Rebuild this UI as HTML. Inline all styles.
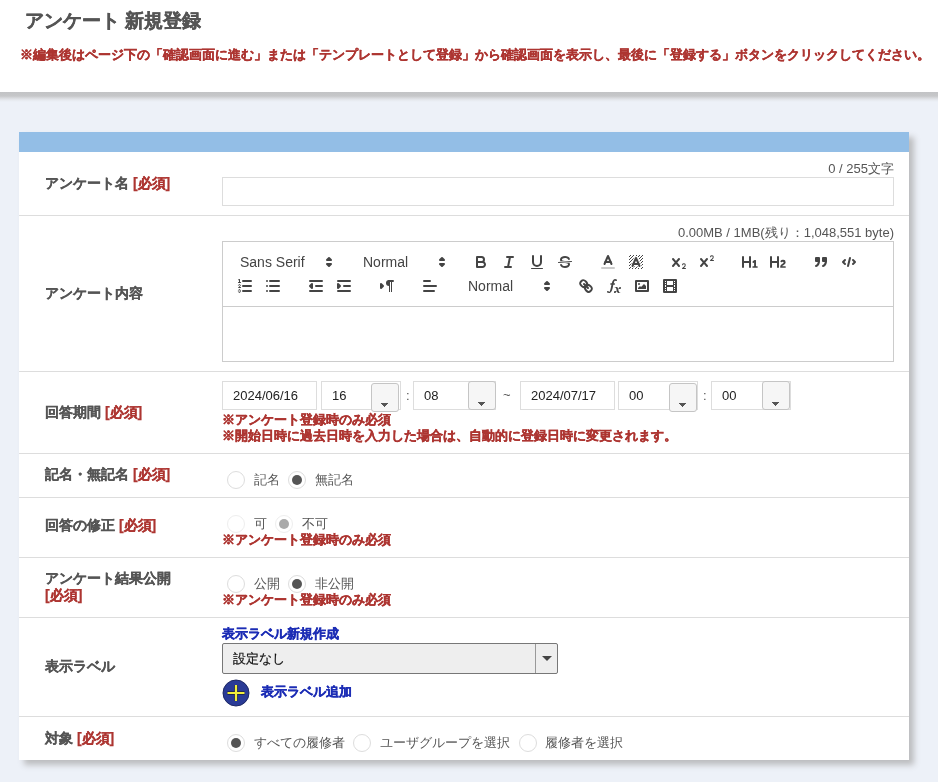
<!DOCTYPE html>
<html><head><meta charset="utf-8">
<style>
*{box-sizing:border-box}
html,body{margin:0;padding:0}
body{width:938px;height:782px;overflow:hidden;background:#edf1f8;font-family:"Liberation Sans",sans-serif;color:#555;position:relative}
.a{position:absolute;white-space:nowrap}
#hdr{position:absolute;left:0;top:0;width:938px;height:92px;background:#fff}
#hsh{position:absolute;left:0;top:92px;width:938px;height:10px;background:linear-gradient(to bottom,#c2c3c5 0px,#c6c7c9 4px,#d8dadd 6px,#e6e9ee 8px,#edf1f8 10px)}
#title{left:25px;top:9px;font-size:19px;font-weight:bold;color:#555;line-height:24px}
#note{left:20px;top:46px;font-size:13px;font-weight:bold;color:#ad3531;line-height:18px}
#card{position:absolute;left:19px;top:132px;width:890px;height:628px;background:#fff;box-shadow:5px 5px 6px #bcbdbf}
#bar{position:absolute;left:19px;top:132px;width:890px;height:20px;background:#93bee6}
.sep{position:absolute;left:19px;width:890px;height:1px;background:#ddd}
.lbl{position:absolute;left:45px;font-size:14px;font-weight:bold;color:#555;line-height:18px;white-space:nowrap}
.req{color:#ad3531}
.red{position:absolute;font-size:13px;font-weight:bold;color:#ad3531;line-height:16px;white-space:nowrap}
.inp{position:absolute;border:1px solid #ddd;background:#fff;height:29px}
.txt{position:absolute;font-size:13px;color:#222;line-height:16px;white-space:nowrap}
.cnt{position:absolute;right:44px;font-size:13px;color:#555;line-height:16px;white-space:nowrap}
.btn{position:absolute;width:28px;height:29px;border:1px solid #c5c5c5;border-radius:3px;background:#f6f6f6}
.btn:after{content:"";position:absolute;left:9px;top:19px;width:7px;height:4px;background:linear-gradient(#555,#555) 0 0/7px 1px no-repeat,linear-gradient(#555,#555) 1px 1px/5px 1px no-repeat,linear-gradient(#555,#555) 2px 2px/3px 1px no-repeat,linear-gradient(#555,#555) 3px 3px/1px 1px no-repeat}
.radio{position:absolute;width:18px;height:18px;border:1px solid #ddd;border-radius:50%;background:#fff}
.radio.on:after{content:"";position:absolute;left:3px;top:3px;width:10px;height:10px;border-radius:50%;background:#555}
.radio.dis{border-color:#eee}
.radio.dis.on:after{background:#aaa}
.rt{position:absolute;font-size:13px;color:#555;line-height:16px;white-space:nowrap}
.blue{position:absolute;font-size:13px;font-weight:bold;color:#1c2db5;line-height:16px;white-space:nowrap}

.ql-toolbar{border:1px solid #ccc;padding:8px;font-family:"Liberation Sans",sans-serif;box-sizing:border-box;line-height:normal;font-size:14px}
.ql-toolbar:after{clear:both;content:'';display:table}
.ql-formats{display:inline-block;vertical-align:middle;margin-right:15px}
.ql-formats:after{clear:both;content:'';display:table}
.ql-toolbar button{background:none;border:none;cursor:pointer;display:inline-block;float:left;height:24px;padding:3px 5px;width:28px;margin:0;box-sizing:border-box}
.ql-toolbar button svg{float:left;height:100%}
.ql-stroke{fill:none;stroke:#444;stroke-linecap:round;stroke-linejoin:round;stroke-width:2}
.ql-fill{fill:#444}
.ql-thin{stroke-width:1}
.ql-even{fill-rule:evenodd}
.ql-picker{color:#444;display:inline-block;float:left;font-size:14px;font-weight:500;height:24px;position:relative;vertical-align:middle}
.ql-picker-label{display:inline-block;height:100%;padding-left:8px;padding-right:2px;position:relative;width:100%;box-sizing:border-box;border:1px solid transparent}
.ql-picker-label::before{content:attr(data-l);display:inline-block;line-height:22px}
.ql-picker-label svg{position:absolute;margin-top:-9px;right:0;top:50%;width:18px;height:18px}
.ql-picker-label svg .ql-stroke{stroke-width:2}
.ql-font{width:108px}.ql-size,.ql-header{width:98px}
.sk{-webkit-text-stroke:0.25px currentColor}
.red.sk,.blue.sk{-webkit-text-stroke:0.35px currentColor}
#note{-webkit-text-stroke:0.3px currentColor}
#title{-webkit-text-stroke:0.45px #555}
.b2:after{top:20px}
</style></head><body><div id="wrap" style="position:absolute;left:0;top:0;width:938px;height:782px;will-change:transform">
<div id="hdr"></div><div id="hsh"></div>
<div id="title" class="a sk">アンケート 新規登録</div>
<div id="note" class="a sk">※編集後はページ下の「確認画面に進む」または「テンプレートとして登録」から確認画面を表示し、最後に「登録する」ボタンをクリックしてください。</div>

<div id="card"></div>
<div id="bar"></div>
<div class="sep" style="top:215px"></div>
<div class="sep" style="top:371px"></div>
<div class="sep" style="top:453px"></div>
<div class="sep" style="top:497px"></div>
<div class="sep" style="top:557px"></div>
<div class="sep" style="top:617px"></div>
<div class="sep" style="top:716px"></div>

<!-- row 1 -->
<div class="lbl sk" style="top:174px">アンケート名 <span class="req">[必須]</span></div>
<div class="cnt" style="top:161px">0 / 255文字</div>
<div class="inp" style="left:222px;top:177px;width:672px"></div>

<!-- row 2 -->
<div class="lbl sk" style="top:284px">アンケート内容</div>
<div class="cnt" style="top:225px">0.00MB / 1MB(残り：1,048,551 byte)</div>
<div class="inp" style="left:222px;top:241px;width:672px;height:121px;border-color:#ccc"></div>

<!-- quill toolbar -->
<div class="ql-toolbar" style="position:absolute;left:222px;top:241px;width:672px;height:66px"><span class="ql-formats"><span class="ql-picker ql-font"><span class="ql-picker-label" data-l="Sans Serif"><svg viewBox="0 0 18 18"><polygon class="ql-stroke" points="7 11 9 13 11 11 7 11"></polygon><polygon class="ql-stroke" points="7 7 9 5 11 7 7 7"></polygon></svg></span></span></span><span class="ql-formats"><span class="ql-picker ql-size"><span class="ql-picker-label" data-l="Normal"><svg viewBox="0 0 18 18"><polygon class="ql-stroke" points="7 11 9 13 11 11 7 11"></polygon><polygon class="ql-stroke" points="7 7 9 5 11 7 7 7"></polygon></svg></span></span></span><span class="ql-formats"><button><svg viewBox="0 0 18 18"><path class="ql-stroke" d="M5,4H9.5A2.5,2.5,0,0,1,12,6.5v0A2.5,2.5,0,0,1,9.5,9H5A0,0,0,0,1,5,9V4A0,0,0,0,1,5,4Z"></path><path class="ql-stroke" d="M5,9h5.5A2.5,2.5,0,0,1,13,11.5v0A2.5,2.5,0,0,1,10.5,14H5a0,0,0,0,1,0,0V9A0,0,0,0,1,5,9Z"></path></svg></button><button><svg viewBox="0 0 18 18"><line class="ql-stroke" x1="7" x2="13" y1="4" y2="4"></line><line class="ql-stroke" x1="5" x2="11" y1="14" y2="14"></line><line class="ql-stroke" x1="8" x2="10" y1="14" y2="4"></line></svg></button><button><svg viewBox="0 0 18 18"><path class="ql-stroke" d="M5,3V9a4.012,4.012,0,0,0,4,4H9a4.012,4.012,0,0,0,4-4V3"></path><rect class="ql-fill" height="1" rx="0.5" ry="0.5" width="12" x="3" y="15"></rect></svg></button><button><svg viewBox="0 0 18 18"><line class="ql-stroke ql-thin" x1="15.5" x2="2.5" y1="8.5" y2="9.5"></line><path class="ql-fill" d="M9.007,8C6.542,7.791,6,7.519,6,6.5,6,5.792,7.283,5,9,5c1.571,0,2.765.679,2.969,1.309a1,1,0,0,0,1.9-.617C13.356,4.106,11.354,3,9,3,6.2,3,4,4.538,4,6.5a3.2,3.2,0,0,0,.5,1.843Z"></path><path class="ql-fill" d="M8.984,10C11.457,10.208,12,10.479,12,11.5c0,0.708-1.283,1.5-3,1.5-1.571,0-2.765-.679-2.969-1.309a1,1,0,1,0-1.9.617C4.644,13.894,6.646,15,9,15c2.8,0,5-1.538,5-3.5a3.2,3.2,0,0,0-.5-1.843Z"></path></svg></button></span><span class="ql-formats"><button><svg viewBox="0 0 18 18"><line class="ql-stroke" style="stroke:#ccc" x1="3" x2="15" y1="15" y2="15"></line><polyline class="ql-stroke" points="5.5 11 9 3 12.5 11"></polyline><line class="ql-stroke" x1="11.63" x2="6.38" y1="9" y2="9"></line></svg></button><button><svg viewBox="0 0 18 18"><g class="ql-fill"><polygon points="6 6.868 6 6 5 6 5 7 5.942 7 6 6.868"></polygon><rect height="1" width="1" x="4" y="4"></rect><polygon points="6.817 5 6 5 6 6 6.38 6 6.817 5"></polygon><rect height="1" width="1" x="2" y="6"></rect><rect height="1" width="1" x="3" y="5"></rect><rect height="1" width="1" x="4" y="7"></rect><polygon points="4 11.439 4 11 3 11 3 12 3.755 12 4 11.439"></polygon><rect height="1" width="1" x="2" y="12"></rect><rect height="1" width="1" x="2" y="9"></rect><rect height="1" width="1" x="2" y="15"></rect><polygon points="4.63 10 4 10 4 11 4.192 11 4.63 10"></polygon><rect height="1" width="1" x="3" y="8"></rect><path d="M10.832,4.2L11,4.582V4H10.708A1.948,1.948,0,0,1,10.832,4.2Z"></path><path d="M7,4.582L7.168,4.2A1.929,1.929,0,0,1,7.292,4H7V4.582Z"></path><path d="M8,13H7.683l-0.351.8a1.933,1.933,0,0,1-.124.2H8V13Z"></path><rect height="1" width="1" x="12" y="2"></rect><rect height="1" width="1" x="11" y="3"></rect><path d="M9,3H8V3.282A1.985,1.985,0,0,1,9,3Z"></path><rect height="1" width="1" x="2" y="3"></rect><rect height="1" width="1" x="6" y="2"></rect><rect height="1" width="1" x="3" y="2"></rect><rect height="1" width="1" x="5" y="3"></rect><rect height="1" width="1" x="9" y="2"></rect><rect height="1" width="1" x="15" y="14"></rect><polygon points="13.447 10.174 13.469 10.225 13.472 10.232 13.808 11 14 11 14 10 13.37 10 13.447 10.174"></polygon><rect height="1" width="1" x="13" y="7"></rect><rect height="1" width="1" x="15" y="5"></rect><rect height="1" width="1" x="14" y="6"></rect><rect height="1" width="1" x="15" y="8"></rect><rect height="1" width="1" x="14" y="9"></rect><path d="M3.775,14H3v1H4V14.314A1.97,1.97,0,0,1,3.775,14Z"></path><rect height="1" width="1" x="14" y="3"></rect><polygon points="12 6.868 12 6 11.62 6 12 6.868"></polygon><rect height="1" width="1" x="15" y="2"></rect><rect height="1" width="1" x="12" y="5"></rect><rect height="1" width="1" x="13" y="4"></rect><polygon points="12.933 9 13 9 13 8 12.495 8 12.933 9"></polygon><rect height="1" width="1" x="9" y="14"></rect><rect height="1" width="1" x="8" y="15"></rect><path d="M6,14.926V15H7V14.316A1.993,1.993,0,0,1,6,14.926Z"></path><rect height="1" width="1" x="5" y="15"></rect><path d="M10.668,13.8L10.317,13H10v1h0.792A1.947,1.947,0,0,1,10.668,13.8Z"></path><rect height="1" width="1" x="11" y="15"></rect><path d="M14.332,12.2a1.99,1.99,0,0,1,.166.8H15V12H14.245Z"></path><rect height="1" width="1" x="14" y="15"></rect><rect height="1" width="1" x="15" y="11"></rect></g><polyline class="ql-stroke" points="5.5 13 9 5 12.5 13"></polyline><line class="ql-stroke" x1="11.63" x2="6.38" y1="11" y2="11"></line></svg></button></span><span class="ql-formats"><button><svg viewBox="0 0 18 18"><path class="ql-fill" d="M15.5,15H13.861a3.858,3.858,0,0,0,1.914-2.975,1.8,1.8,0,0,0-1.6-1.751A1.921,1.921,0,0,0,12.021,11.7a0.50013,0.50013,0,1,0,.957.291h0a0.914,0.914,0,0,1,1.053-.725,0.81,0.81,0,0,1,.744.762c0,1.076-1.16971,1.86982-1.93971,2.43082A1.45639,1.45639,0,0,0,12,15.5a0.5,0.5,0,0,0,.5.5h3A0.5,0.5,0,0,0,15.5,15Z"></path><path class="ql-fill" d="M9.65,5.241a1,1,0,0,0-1.409.108L6,7.964,3.759,5.349A1,1,0,0,0,2.192,6.59178Q2.21541,6.6213,2.241,6.649L4.684,9.5,2.241,12.35A1,1,0,0,0,3.71,13.70722q0.02557-.02768.049-0.05722L6,11.036,8.241,13.65a1,1,0,1,0,1.567-1.24277Q9.78459,12.3777,9.759,12.35L7.316,9.5,9.759,6.651A1,1,0,0,0,9.65,5.241Z"></path></svg></button><button><svg viewBox="0 0 18 18"><path class="ql-fill" d="M15.5,7H13.861a4.015,4.015,0,0,0,1.914-2.975,1.8,1.8,0,0,0-1.6-1.751A1.922,1.922,0,0,0,12.021,3.7a0.5,0.5,0,1,0,.957.291,0.917,0.917,0,0,1,1.053-.725,0.81,0.81,0,0,1,.744.762c0,1.077-1.164,1.925-1.934,2.486A1.423,1.423,0,0,0,12,7.5a0.5,0.5,0,0,0,.5.5h3A0.5,0.5,0,0,0,15.5,7Z"></path><path class="ql-fill" d="M9.651,5.241a1,1,0,0,0-1.41.108L6,7.964,3.759,5.349a1,1,0,1,0-1.519,1.3L4.683,9.5,2.241,12.35a1,1,0,1,0,1.519,1.3L6,11.036,8.241,13.65a1,1,0,0,0,1.519-1.3L7.317,9.5,9.759,6.651A1,1,0,0,0,9.651,5.241Z"></path></svg></button></span><span class="ql-formats"><button><svg viewBox="0 0 18 18"><path class="ql-fill" d="M10,4V14a1,1,0,0,1-2,0V10H3v4a1,1,0,0,1-2,0V4A1,1,0,0,1,3,4V8H8V4a1,1,0,0,1,2,0Zm6.06787,9.209H14.98975V7.59863a.54085.54085,0,0,0-.605-.60547h-.62744a1.01119,1.01119,0,0,0-.748.29688L11.645,8.56641a.5435.5435,0,0,0-.022.8584l.28613.30762a.53861.53861,0,0,0,.84717.0332l.09912-.08789a1.2137,1.2137,0,0,0,.2417-.35254h.02246s-.01123.30859-.01123.60547V13.209H12.041a.54085.54085,0,0,0-.605.60547v.43945a.54085.54085,0,0,0,.605.60547h4.02686a.54085.54085,0,0,0,.605-.60547v-.43945A.54085.54085,0,0,0,16.06787,13.209Z"></path></svg></button><button><svg viewBox="0 0 18 18"><path class="ql-fill" d="M16.73975,13.81445v.43945a.54085.54085,0,0,1-.605.60547H11.855a.58392.58392,0,0,1-.64893-.60547V14.0127c0-2.90527,3.39941-3.42187,3.39941-4.55469a.77675.77675,0,0,0-.84717-.78125,1.17684,1.17684,0,0,0-.83594.38477c-.2749.26367-.561.374-.85791.13184l-.4292-.34082c-.30811-.24219-.38525-.51758-.1543-.81445a2.97155,2.97155,0,0,1,2.45361-1.17676,2.45393,2.45393,0,0,1,2.68408,2.40918c0,2.45312-3.1792,2.92676-3.27832,3.93848h2.79443A.54085.54085,0,0,1,16.73975,13.81445ZM9,3A.99974.99974,0,0,0,8,4V8H3V4A1,1,0,0,0,1,4V14a1,1,0,0,0,2,0V10H8v4a1,1,0,0,0,2,0V4A.99974.99974,0,0,0,9,3Z"></path></svg></button></span><span class="ql-formats"><button><svg viewBox="0 0 18 18"><rect class="ql-fill ql-stroke" height="3" width="3" x="4" y="5"></rect><rect class="ql-fill ql-stroke" height="3" width="3" x="11" y="5"></rect><path class="ql-even ql-fill ql-stroke" d="M7,8c0,4.031-3,5-3,5"></path><path class="ql-even ql-fill ql-stroke" d="M14,8c0,4.031-3,5-3,5"></path></svg></button><button><svg viewBox="0 0 18 18"><polyline class="ql-even ql-stroke" points="5 7 3 9 5 11"></polyline><polyline class="ql-even ql-stroke" points="13 7 15 9 13 11"></polyline><line class="ql-stroke" x1="10" x2="8" y1="5" y2="13"></line></svg></button></span><span class="ql-formats"><button><svg viewBox="0 0 18 18"><line class="ql-stroke" x1="7" x2="15" y1="4" y2="4"></line><line class="ql-stroke" x1="7" x2="15" y1="9" y2="9"></line><line class="ql-stroke" x1="7" x2="15" y1="14" y2="14"></line><line class="ql-stroke ql-thin" x1="2.5" x2="4.5" y1="5.5" y2="5.5"></line><path class="ql-fill" d="M3.5,6A0.5,0.5,0,0,1,3,5.5V3.085l-0.276.138A0.5,0.5,0,0,1,2.053,3c-0.124-.247-0.023-0.324.224-0.447l1-.5A0.5,0.5,0,0,1,4,2.5v3A0.5,0.5,0,0,1,3.5,6Z"></path><path class="ql-stroke ql-thin" d="M4.5,10.5h-2c0-.234,1.85-1.076,1.85-2.234A0.959,0.959,0,0,0,2.5,8.156"></path><path class="ql-stroke ql-thin" d="M2.5,14.846a0.959,0.959,0,0,0,1.85-.109A0.7,0.7,0,0,0,3.75,14a0.688,0.688,0,0,0,.6-0.736,0.959,0.959,0,0,0-1.85-.109"></path></svg></button><button><svg viewBox="0 0 18 18"><line class="ql-stroke" x1="6" x2="15" y1="4" y2="4"></line><line class="ql-stroke" x1="6" x2="15" y1="9" y2="9"></line><line class="ql-stroke" x1="6" x2="15" y1="14" y2="14"></line><line class="ql-stroke" x1="3" x2="3" y1="4" y2="4"></line><line class="ql-stroke" x1="3" x2="3" y1="9" y2="9"></line><line class="ql-stroke" x1="3" x2="3" y1="14" y2="14"></line></svg></button></span><span class="ql-formats"><button><svg viewBox="0 0 18 18"><line class="ql-stroke" x1="3" x2="15" y1="14" y2="14"></line><line class="ql-stroke" x1="3" x2="15" y1="4" y2="4"></line><line class="ql-stroke" x1="9" x2="15" y1="9" y2="9"></line><polyline class="ql-fill ql-stroke" points="5 7 5 11 3 9 5 7"></polyline></svg></button><button><svg viewBox="0 0 18 18"><line class="ql-stroke" x1="3" x2="15" y1="14" y2="14"></line><line class="ql-stroke" x1="3" x2="15" y1="4" y2="4"></line><line class="ql-stroke" x1="9" x2="15" y1="9" y2="9"></line><polyline class="ql-fill ql-stroke" points="3 7 3 11 5 9 3 7"></polyline></svg></button></span><span class="ql-formats"><button><svg viewBox="0 0 18 18"><polygon class="ql-stroke ql-fill" points="3 11 5 9 3 7 3 11"></polygon><line class="ql-stroke ql-fill" x1="15" x2="11" y1="4" y2="4"></line><path class="ql-fill" d="M11,3a3,3,0,0,0,0,6h1V3H11Z"></path><rect class="ql-fill" height="11" width="1" x="11" y="4"></rect><rect class="ql-fill" height="11" width="1" x="13" y="4"></rect></svg></button></span><span class="ql-formats"><button><svg viewBox="0 0 18 18"><line class="ql-stroke" x1="3" x2="15" y1="9" y2="9"></line><line class="ql-stroke" x1="3" x2="13" y1="14" y2="14"></line><line class="ql-stroke" x1="3" x2="9" y1="4" y2="4"></line></svg></button></span><span class="ql-formats"><span class="ql-picker ql-header"><span class="ql-picker-label" data-l="Normal"><svg viewBox="0 0 18 18"><polygon class="ql-stroke" points="7 11 9 13 11 11 7 11"></polygon><polygon class="ql-stroke" points="7 7 9 5 11 7 7 7"></polygon></svg></span></span></span><span class="ql-formats"><button><svg viewBox="0 0 18 18"><line class="ql-stroke" x1="7" x2="11" y1="7" y2="11"></line><path class="ql-even ql-stroke" d="M8.9,4.577a3.476,3.476,0,0,1,.36,4.679A3.476,3.476,0,0,1,4.577,8.9C3.185,7.5,2.035,6.4,4.217,4.217S7.5,3.185,8.9,4.577Z"></path><path class="ql-even ql-stroke" d="M13.423,9.1a3.476,3.476,0,0,0-4.679-.36,3.476,3.476,0,0,0,.36,4.679c1.392,1.392,2.5,2.542,4.679.36S14.815,10.5,13.423,9.1Z"></path></svg></button><button><svg viewBox="0 0 18 18"><path class="ql-fill" d="M11.759,2.482a2.561,2.561,0,0,0-3.53.607A7.656,7.656,0,0,0,6.8,6.2C6.109,9.188,5.275,14.677,4.15,14.927a1.545,1.545,0,0,0-1.3-.933A0.922,0.922,0,0,0,2,15.036S1.954,16,4.119,16s3.091-2.691,3.7-5.553c0.177-.826.36-1.726,0.554-2.6L8.775,6.2c0.381-1.421.807-2.521,1.306-2.676a1.014,1.014,0,0,0,1.02.56A0.966,0.966,0,0,0,11.759,2.482Z"></path><rect class="ql-fill" height="1.6" rx="0.8" ry="0.8" width="5" x="5.15" y="6.2"></rect><path class="ql-fill" d="M13.663,12.027a1.662,1.662,0,0,1,.266-0.276q0.193,0.069.456,0.138a2.1,2.1,0,0,0,.535.069,1.075,1.075,0,0,0,.767-0.3,1.044,1.044,0,0,0,.314-0.8,0.84,0.84,0,0,0-.238-0.619,0.8,0.8,0,0,0-.594-0.239,1.154,1.154,0,0,0-.781.3,4.607,4.607,0,0,0-.781,1q-0.091.15-.218,0.346l-0.246.38c-0.068-.288-0.137-0.582-0.212-0.885-0.459-1.847-2.494-.984-2.941-0.8-0.482.2-.353,0.647-0.094,0.529a0.869,0.869,0,0,1,1.281.585c0.217,0.751.377,1.436,0.527,2.038a5.688,5.688,0,0,1-.362.467,2.69,2.69,0,0,1-.264.271q-0.221-.08-0.471-0.147a2.029,2.029,0,0,0-.522-0.066,1.079,1.079,0,0,0-.768.3A1.058,1.058,0,0,0,9,15.131a0.82,0.82,0,0,0,.832.852,1.134,1.134,0,0,0,.787-0.3,5.11,5.11,0,0,0,.776-0.993q0.141-.219.215-0.34c0.046-.076.122-0.194,0.223-0.346a2.786,2.786,0,0,0,.918,1.726,2.582,2.582,0,0,0,2.376-.185c0.317-.181.212-0.565,0-0.494A0.807,0.807,0,0,1,14.176,15a5.159,5.159,0,0,1-.913-2.446l0,0Q13.487,12.24,13.663,12.027Z"></path></svg></button><button><svg viewBox="0 0 18 18"><rect class="ql-stroke" height="10" width="12" x="3" y="4"></rect><circle class="ql-fill" cx="6" cy="7" r="1"></circle><polyline class="ql-even ql-fill" points="5 12 5 11 7 9 8 10 11 7 13 9 13 12 5 12"></polyline></svg></button><button><svg viewBox="0 0 18 18"><rect class="ql-stroke" height="12" width="12" x="3" y="3"></rect><rect class="ql-fill" height="12" width="1" x="5" y="3"></rect><rect class="ql-fill" height="12" width="1" x="12" y="3"></rect><rect class="ql-fill" height="2" width="8" x="5" y="8"></rect><rect class="ql-fill" height="1" width="3" x="3" y="5"></rect><rect class="ql-fill" height="1" width="3" x="3" y="7"></rect><rect class="ql-fill" height="1" width="3" x="3" y="10"></rect><rect class="ql-fill" height="1" width="3" x="3" y="12"></rect><rect class="ql-fill" height="1" width="3" x="12" y="5"></rect><rect class="ql-fill" height="1" width="3" x="12" y="7"></rect><rect class="ql-fill" height="1" width="3" x="12" y="10"></rect><rect class="ql-fill" height="1" width="3" x="12" y="12"></rect></svg></button></span></div>


<!-- row 3 -->
<div class="lbl sk" style="top:403px">回答期間 <span class="req">[必須]</span></div>
<div class="inp" style="left:222px;top:381px;width:95px"></div><div class="txt" style="left:233px;top:388px">2024/06/16</div>
<div class="inp" style="left:321px;top:381px;width:80px"></div><div class="txt" style="left:332px;top:388px">16</div>
<div class="btn" style="left:371px;top:383px"></div>
<div class="a" style="left:406px;top:388px;font-size:13px;line-height:16px">:</div>
<div class="inp" style="left:413px;top:381px;width:83px"></div><div class="txt" style="left:424px;top:388px">08</div>
<div class="btn b2" style="left:468px;top:381px"></div>
<div class="a" style="left:503px;top:387px;font-size:13px;line-height:16px">~</div>
<div class="inp" style="left:520px;top:381px;width:95px"></div><div class="txt" style="left:531px;top:388px">2024/07/17</div>
<div class="inp" style="left:618px;top:381px;width:80px"></div><div class="txt" style="left:629px;top:388px">00</div>
<div class="btn" style="left:669px;top:383px"></div>
<div class="a" style="left:703px;top:388px;font-size:13px;line-height:16px">:</div>
<div class="inp" style="left:711px;top:381px;width:80px"></div><div class="txt" style="left:722px;top:388px">00</div>
<div class="btn b2" style="left:762px;top:381px"></div>
<div class="red sk" style="left:222px;top:412px">※アンケート登録時のみ必須</div>
<div class="red sk" style="left:222px;top:428px">※開始日時に過去日時を入力した場合は、自動的に登録日時に変更されます。</div>

<!-- row 4 -->
<div class="lbl sk" style="top:465px">記名・無記名 <span class="req">[必須]</span></div>
<div class="radio" style="left:227px;top:471px"></div><div class="rt" style="left:254px;top:472px">記名</div>
<div class="radio on" style="left:288px;top:471px"></div><div class="rt" style="left:315px;top:472px">無記名</div>

<!-- row 5 -->
<div class="lbl sk" style="top:516px">回答の修正 <span class="req">[必須]</span></div>
<div class="radio dis" style="left:227px;top:515px"></div><div class="rt" style="left:254px;top:516px">可</div>
<div class="radio dis on" style="left:275px;top:515px"></div><div class="rt" style="left:302px;top:516px">不可</div>
<div class="red sk" style="left:222px;top:532px">※アンケート登録時のみ必須</div>

<!-- row 6 -->
<div class="lbl sk" style="top:569px">アンケート結果公開</div>
<div class="lbl sk" style="top:586px;color:#ad3531">[必須]</div>
<div class="radio" style="left:227px;top:575px"></div><div class="rt" style="left:254px;top:576px">公開</div>
<div class="radio on" style="left:288px;top:575px"></div><div class="rt" style="left:315px;top:576px">非公開</div>
<div class="red sk" style="left:222px;top:592px">※アンケート登録時のみ必須</div>

<!-- row 7 -->
<div class="lbl sk" style="top:657px">表示ラベル</div>
<div class="blue sk" style="left:222px;top:626px">表示ラベル新規作成</div>
<div class="a" style="left:222px;top:643px;width:336px;height:31px;border:1px solid #777;border-radius:2px;background:#eee"></div>
<div class="a" style="left:535px;top:644px;width:1px;height:29px;background:#999"></div>
<div class="a" style="left:542px;top:656px;border-left:5px solid transparent;border-right:5px solid transparent;border-top:5px solid #444"></div>
<div class="txt" style="left:233px;top:651px;font-size:13px;color:#111;-webkit-text-stroke:0.2px #111">設定なし</div>
<svg class="a" style="left:222px;top:679px" width="28" height="28" viewBox="0 0 28 28"><circle cx="14" cy="14" r="13" fill="#2a3b96" stroke="#1d2864" stroke-width="1"/><path d="M14 6V22M5.5 14H22.5" stroke="#1d2040" stroke-width="3.3"/><path d="M14 6V22M5.5 14H22.5" stroke="#f2ee3c" stroke-width="2.2"/></svg>
<div class="blue sk" style="left:261px;top:684px">表示ラベル追加</div>

<!-- row 8 -->
<div class="lbl sk" style="top:729px">対象 <span class="req">[必須]</span></div>
<div class="radio on" style="left:227px;top:734px"></div><div class="rt" style="left:254px;top:735px">すべての履修者</div>
<div class="radio" style="left:353px;top:734px"></div><div class="rt" style="left:380px;top:735px">ユーザグループを選択</div>
<div class="radio" style="left:519px;top:734px"></div><div class="rt" style="left:545px;top:735px">履修者を選択</div>
</div></body></html>
